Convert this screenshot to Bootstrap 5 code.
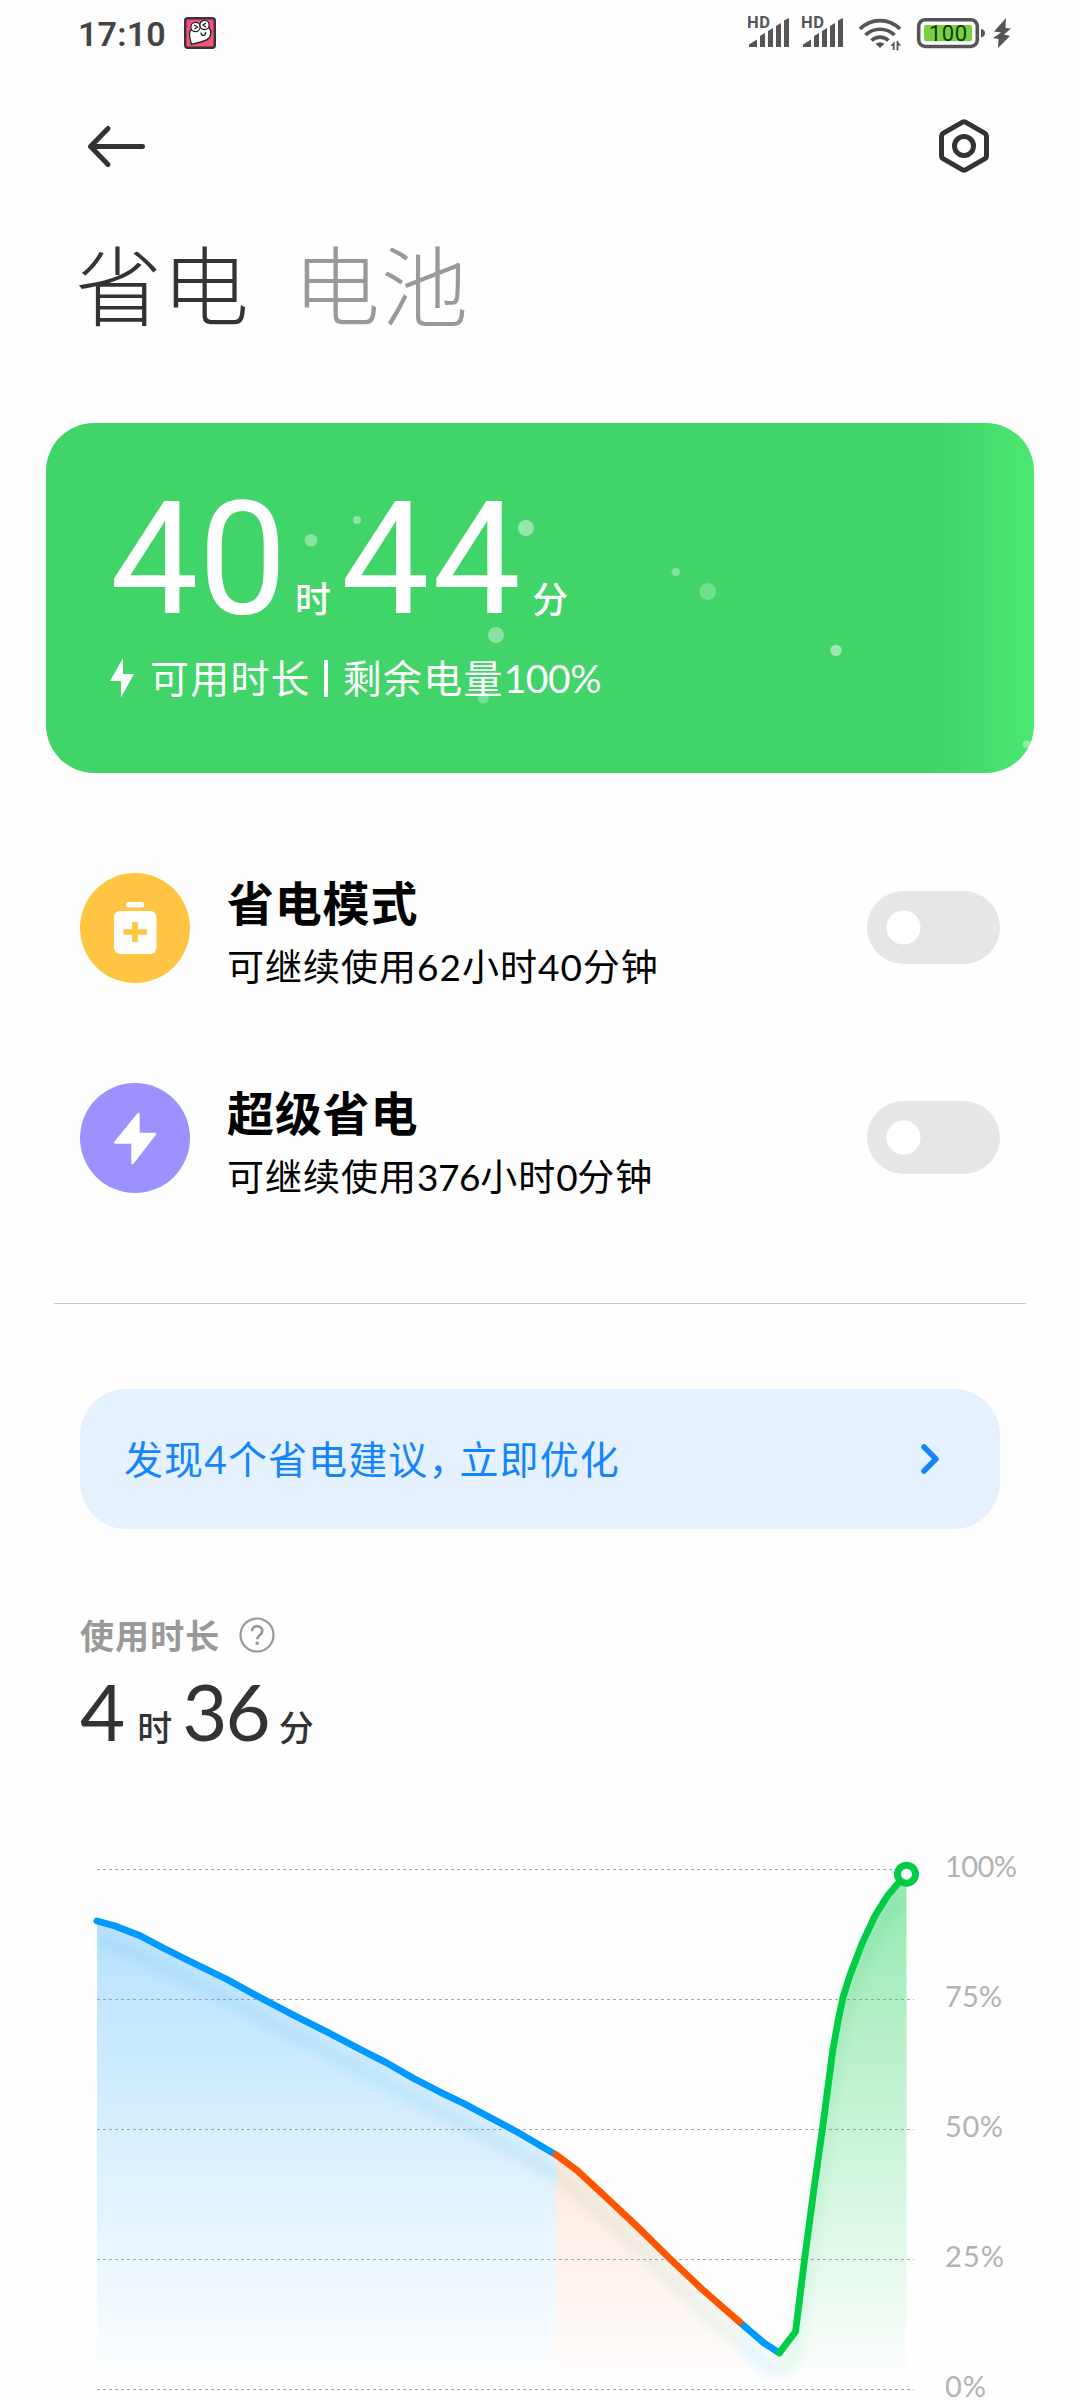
<!DOCTYPE html>
<html lang="zh-CN">
<head>
<meta charset="utf-8">
<meta name="viewport" content="width=device-width, initial-scale=1">
<title>省电与电池</title>
<link href="https://cdn.jsdelivr.net/npm/bootstrap@5.3.0/dist/css/bootstrap.min.css" rel="stylesheet">
<style>
  body { width: 1080px; height: 2400px; overflow: hidden; background: #fefefe; color: #333; font-family: Lato, "Noto Sans CJK SC", sans-serif; }
  svg { display: block; flex: none; }
  .cjk { font-family: "Noto Sans CJK SC", sans-serif; }
  .status-bar { height: 66px; padding: 0 68px 0 78px; }
  .status-time { font: 600 34px/66px Roboto, sans-serif; color: #444; letter-spacing: .2px; width: 106px; margin-top: 1px; }
  .top-bar { height: 160px; padding: 0 88px 0 85px; }
  .tab-title { font-size: 87px; line-height: 100px; font-weight: 300; margin-top: 6px; padding-left: 75px; gap: 44px; }
  .tab-off { color: #999; letter-spacing: 1px; }
  .hero { margin: 91px 46px 0; height: 350px; border-radius: 48px; color: #fff; padding: 61px 64px 0; overflow: hidden;
          background: linear-gradient(90deg, #41d469 0, #41d469 895px, #4ae973 988px); }
  .hero-time { font: 400 157.5px/150px Roboto, "Noto Sans CJK SC", sans-serif; letter-spacing: 2.6px; white-space: nowrap; }
  .hero-unit { font-size: 36px; letter-spacing: 0; font-weight: 500; font-family: "Noto Sans CJK SC", sans-serif; line-height: 1; }
  .hero-sub { font-size: 39px; line-height: 50px; margin-top: 19px; letter-spacing: 1.2px; white-space: nowrap; }
  .hero-bar { width: 4px; height: 37px; background: #fff; margin: 0 15px 0 13px; }
  .mode-list { padding: 99px 80px 0; }
  .mode-row { height: 210px; }
  .mode-icon { margin-top: 1px; margin-right: 37px; }
  .mode-name { font-size: 47px; line-height: 60px; letter-spacing: .8px; font-weight: 700; color: #000; margin-top: -1px; }
  .mode-info { font-size: 37px; line-height: 50px; letter-spacing: 1px; color: #000; margin-top: 11px; }
  .tight { letter-spacing: -.4px; }
  .mode-switch { appearance: none; width: 133px; height: 73px; border-radius: 37px; margin: 19px 0 0; border: 0;
                 background: radial-gradient(circle at 36.5px 36.5px, #fff 16.6px, #e6e6e6 17.4px); }
  .divider { height: 1px; background: #c8c8c8; margin: 11px 54px 0; }
  .tip { margin: 85px 80px 0; height: 140px; border-radius: 46px; background: #e5f1ff; color: #1485ff; padding: 0 60px 0 44px;
         font-size: 39px; letter-spacing: 1.1px; }
  .tip-comma { letter-spacing: -8px; }
  .usage { padding: 86px 80px 0; }
  .usage-label { font-size: 34px; line-height: 40px; letter-spacing: 1.1px; font-weight: 700; color: #999; }
  .usage-time { font-size: 78px; line-height: 80px; margin-top: 16px; white-space: nowrap; color: #333; }
  .usage-unit { font-size: 35px; line-height: 1; font-weight: 500; }
  .chart { margin-top: 49px; }
  .axis { font: 29px Lato, sans-serif; fill: #b3b3b3; }
</style>
</head>
<body>
<header>
  <div class="status-bar d-flex align-items-center">
    <span class="status-time">17:10</span>
    <svg width="32" height="32" viewBox="0 0 32 32">
      <defs><linearGradient id="pk" x2="0" y2="1"><stop stop-color="#ee4f96"/><stop offset="1" stop-color="#f4586a"/></linearGradient></defs>
      <rect x="1.2" y="1.2" width="29.6" height="29.6" rx="2.5" fill="url(#pk)" stroke="#3a3336" stroke-width="2.4"/>
      <path d="M6 14c-1.500 5 .5 9 1.500 13.500l11-3C25 23 28 19 26.500 13l-3-4-13 2z" fill="#fff" stroke="#222" stroke-width="1.300"/>
      <circle cx="11.500" cy="10" r="4.600" fill="#fff" stroke="#222" stroke-width="1.200"/>
      <circle cx="20.500" cy="8" r="4.600" fill="#fff" stroke="#222" stroke-width="1.200"/>
      <path d="M10 8l3.500 2-3 2M22 6l-3 2 3 2M17 15.500c0 4 5 4 4.500-.5" fill="none" stroke="#222" stroke-width="1.300"/>
    </svg>
    <svg class="ms-auto" width="264" height="36" viewBox="748 15 264 36" fill="#555">
      <g id="sig">
        <text x="747" y="28" font-family="Roboto, sans-serif" font-size="16.5" font-weight="700" textLength="23">HD</text>
        <path d="M749 47v-2.500l8-5V47zM760 47V36l5-3V47zM768 47V31l5-3V47zM776 47V26l5-3V47zM784 47V20.500l5-2.500V47z"/>
      </g>
      <use href="#sig" x="54"/>
      <path d="M860 29a28 28 0 0 1 40 0M865.500 35a21 21 0 0 1 29 0M871.500 40.500a12.500 12.500 0 0 1 17 0" fill="none" stroke="#555" stroke-width="3.600"/>
      <path d="M880 48l-4.500-4.200a7 7 0 0 1 9 0z"/>
      <path d="M894.600 41v9h-1.800v-4h-2.200zM896.600 50.500v-9.500h1.800v4.500h3l-3-3v8z"/>
      <rect x="918.700" y="19.700" width="58.600" height="26.800" rx="6.500" fill="none" stroke="#555" stroke-width="3.600"/>
      <rect x="924" y="25" width="48" height="16.300" rx="2" fill="#78d141"/>
      <path d="M981 29q4 .5 4 4t-4 4.500z"/>
      <text x="929" y="41" font-family="Roboto, sans-serif" font-size="22" fill="#17380b" textLength="38">100</text>
      <path d="M1006 18l-12 13.500 7 1-8 5.500 5.500 1-.5 9 12-12-6-1.500 7-6-5.500-.5z"/>
    </svg>
  </div>
  <nav class="top-bar d-flex align-items-center justify-content-between">
    <svg width="62" height="46" viewBox="0 0 62 46" fill="none" stroke="#333" stroke-width="5" stroke-linecap="round" stroke-linejoin="round"><path d="M23 5.500L5.500 23.500 23 41.500M5.500 23.500H57.500"/></svg>
    <svg width="56" height="58" viewBox="0 0 56 58" fill="none" stroke="#333" stroke-width="5" stroke-linejoin="round"><path d="M26.500 5.200q1.500-.8 3 0L49 16.300q1.500 1 1.500 2.700V39q0 1.700-1.500 2.700L29.500 52.800q-1.500.8-3 0L7 41.700q-1.500-1-1.500-2.700V19q0-1.700 1.500-2.700z"/><circle cx="28" cy="29" r="9.500"/></svg>
  </nav>
  <div class="tab-title cjk d-flex"><span>省电</span><span class="tab-off">电池</span></div>
</header>

<main>
  <section class="hero position-relative">
    <svg class="position-absolute top-0 start-0" width="988" height="350" viewBox="46 423 988 350" fill="#fff">
      <circle cx="311" cy="540.300" r="6.300" opacity=".38"/><circle cx="357" cy="520" r="4.100" opacity=".38"/>
      <circle cx="526" cy="528" r="8" opacity=".45"/><circle cx="496" cy="635" r="8" opacity=".38"/>
      <circle cx="483.300" cy="698" r="5.500" opacity=".3"/><circle cx="675.700" cy="572" r="4.300" opacity=".33"/>
      <circle cx="707.700" cy="591.600" r="8.500" opacity=".26"/><circle cx="836" cy="650.400" r="5.700" opacity=".48"/>
      <circle cx="1026.700" cy="744.400" r="4" opacity=".36"/>
    </svg>
    <div class="hero-time position-relative d-flex align-items-baseline">
      <span style="letter-spacing:0">40</span><span class="hero-unit" style="margin-left:8px">时</span><span style="margin-left:10px">44</span><span class="hero-unit" style="margin-left:9px">分</span>
    </div>
    <div class="hero-sub position-relative d-flex align-items-center">
      <svg width="24" height="40" viewBox="110 658 24 40" fill="#fff"><path d="M123 658l-13 23h11v16.500L134 674h-11z"/></svg>
      <span style="margin-left:16px">可用时长</span><i class="hero-bar"></i><span>剩余电量<span class="tight">100%</span></span>
    </div>
  </section>

  <section class="mode-list">
    <div class="mode-row d-flex align-items-start">
      <svg class="mode-icon" width="110" height="110" viewBox="80 873 110 110">
        <circle cx="135" cy="928" r="55" fill="#ffc542"/>
        <rect x="126" y="902" width="18" height="5.500" rx="2.500" fill="#fff"/><rect x="114" y="911" width="42.500" height="43" rx="6" fill="#fff"/>
        <path d="M135 922v20M123.500 932h23.500" stroke="#ffc542" stroke-width="5.600"/>
      </svg>
      <div class="flex-grow-1"><div class="mode-name cjk">省电模式</div><div class="mode-info">可继续使用62小时40分钟</div></div>
      <input class="mode-switch" type="checkbox" role="switch" aria-label="省电模式">
    </div>
    <div class="mode-row d-flex align-items-start">
      <svg class="mode-icon" width="110" height="110" viewBox="80 1083 110 110">
        <circle cx="135" cy="1138" r="55" fill="#9d91ff"/>
        <path d="M138.500 1114v20H155l-22.500 29v-20.500H115.200z" fill="#fff" stroke="#fff" stroke-width="2.400" stroke-linejoin="round"/>
      </svg>
      <div class="flex-grow-1"><div class="mode-name cjk">超级省电</div><div class="mode-info">可继续使用<span class="tight">376</span>小时<span class="tight">0</span>分钟</div></div>
      <input class="mode-switch" type="checkbox" role="switch" aria-label="超级省电">
    </div>
  </section>
  <div class="divider"></div>

  <section class="tip d-flex align-items-center justify-content-between">
    <span>发现4个省电建议<span class="tip-comma">，</span>立即优化</span>
    <svg width="20" height="32" viewBox="0 0 20 32" fill="none" stroke="#1485ff" stroke-width="5.500" stroke-linecap="round" stroke-linejoin="round"><path d="M4 4l12 12L4 28"/></svg>
  </section>

  <section class="usage">
    <div class="usage-label cjk d-flex align-items-center">使用时长
      <svg style="margin-left:19px" width="36" height="36" viewBox="0 0 36 36" fill="none" stroke="#999"><circle cx="18" cy="18" r="16.500" stroke-width="2.200"/><path d="M13 14.200c0-7 10.300-6.500 10.300-.2 0 4-5.100 4.300-5.100 8.300" stroke-width="2.600"/><circle cx="18.200" cy="26.300" r="1.700" fill="#999" stroke="none"/></svg>
    </div>
    <div class="usage-time d-flex align-items-baseline"><span>4</span><span class="usage-unit cjk" style="margin-left:12px">时</span><span style="margin-left:10px;letter-spacing:-2px">36</span><span class="usage-unit cjk" style="margin-left:10px">分</span></div>
  </section>

  <svg class="chart" width="1080" height="600" viewBox="0 1800 1080 600" fill="none">
    <defs>
      <linearGradient id="gb" gradientUnits="userSpaceOnUse" x1="0" y1="1921" x2="0" y2="2385"><stop stop-color="#0099ff" stop-opacity=".28"/><stop offset="1" stop-color="#0099ff" stop-opacity="0"/></linearGradient>
      <linearGradient id="go" gradientUnits="userSpaceOnUse" x1="0" y1="2154" x2="0" y2="2385"><stop stop-color="#ff5500" stop-opacity=".13"/><stop offset="1" stop-color="#ff5500" stop-opacity="0"/></linearGradient>
      <linearGradient id="gg" gradientUnits="userSpaceOnUse" x1="0" y1="1874" x2="0" y2="2385"><stop stop-color="#00cc44" stop-opacity=".42"/><stop offset="1" stop-color="#00cc44" stop-opacity="0"/></linearGradient>
      <filter id="soft" filterUnits="userSpaceOnUse" x="40" y="1800" width="940" height="600"><feGaussianBlur stdDeviation="6"/></filter>
    </defs>
    <path stroke="#aaa" stroke-dasharray="3 3" d="M97 1869.500H914M97 1999.500H914M97 2129.500H914M97 2259.500H914M97 2389.500H914"/>
    <path fill="url(#gb)" d="M97 1921L115 1926 140.700 1936 163.300 1948 226.700 1979.300 293.300 2015 360 2049.300 440 2092 463.300 2103 520 2133.600 556 2154.600V2389H97z"/>
    <path fill="url(#go)" d="M556 2154.600L577 2170.400 636.400 2225.700 701.800 2289 740 2322V2389H556z"/>
    <path fill="url(#gb)" d="M740 2322L764 2343 779.300 2353V2389H740z"/>
    <path fill="url(#gg)" d="M779.300 2353L795.500 2332 822.400 2129 832.700 2050.700 843 1997 862 1943.600 875 1915.700 887.800 1895.400 906.500 1874V2389H779.300z"/>
    <g stroke-width="12" filter="url(#soft)" opacity=".09">
      <path stroke="#0090c0" d="M97 1941L115 1946 140.700 1956 163.300 1968 226.700 1999.300 293.300 2035 360 2069.300 440 2112 520 2153.600 556 2174.600"/>
      <path stroke="#20a870" d="M556 2174.600L577 2190.400 636.400 2245.700 701.800 2309 740 2342"/>
      <path stroke="#0095ff" d="M740 2342L764 2363 779.300 2373"/>
      <path stroke="#00b044" d="M779.300 2373L795.500 2352 822.400 2149 832.700 2070.700 843 2017 862 1963.600 875 1935.700 887.800 1915.400 902 1898"/>
    </g>
    <g stroke-width="6.800" stroke-linecap="round" stroke-linejoin="round">
      <path stroke="#0099ff" d="M97 1921L115 1926 140.700 1936 163.300 1948 193.300 1963 226.700 1979.300 260 1997.500 293.300 2015 326.700 2031.800 360 2049.300 386.700 2062.900 413.300 2078.200 440 2092.100 463.300 2103.200 496.700 2121 520 2133.600 555.700 2154.600"/>
      <path stroke="#0099ff" d="M739.700 2322.100L763.800 2342.900 779.300 2352.900"/>
      <path stroke="#ff5500" d="M555.700 2154.600L577.200 2170.400 602 2193.600 636.400 2225.700 670.900 2259.600 701.800 2289 739.700 2322.100"/>
      <path stroke="#00cc44" d="M779.300 2352.900L795.500 2331.800 804.500 2259.600 813.800 2190 822.400 2129.300 832.700 2050.700 838.200 2020.400 843 1997.100 850 1975 862 1943.600 875 1915.700 887.800 1895.400 900 1881 906.400 1874.300"/>
    </g>
    <circle cx="906.500" cy="1874.200" r="9" fill="#fff" stroke="#00cc44" stroke-width="7"/>
    <g class="axis">
      <text x="945" y="1877" textLength="72">100%</text><text x="945" y="2007" textLength="57">75%</text><text x="945" y="2137" textLength="58">50%</text><text x="945" y="2267" textLength="59">25%</text><text x="945" y="2397" textLength="41">0%</text>
    </g>
  </svg>
</main>
<script src="https://cdn.jsdelivr.net/npm/bootstrap@5.3.0/dist/js/bootstrap.bundle.min.js"></script>
</body>
</html>
